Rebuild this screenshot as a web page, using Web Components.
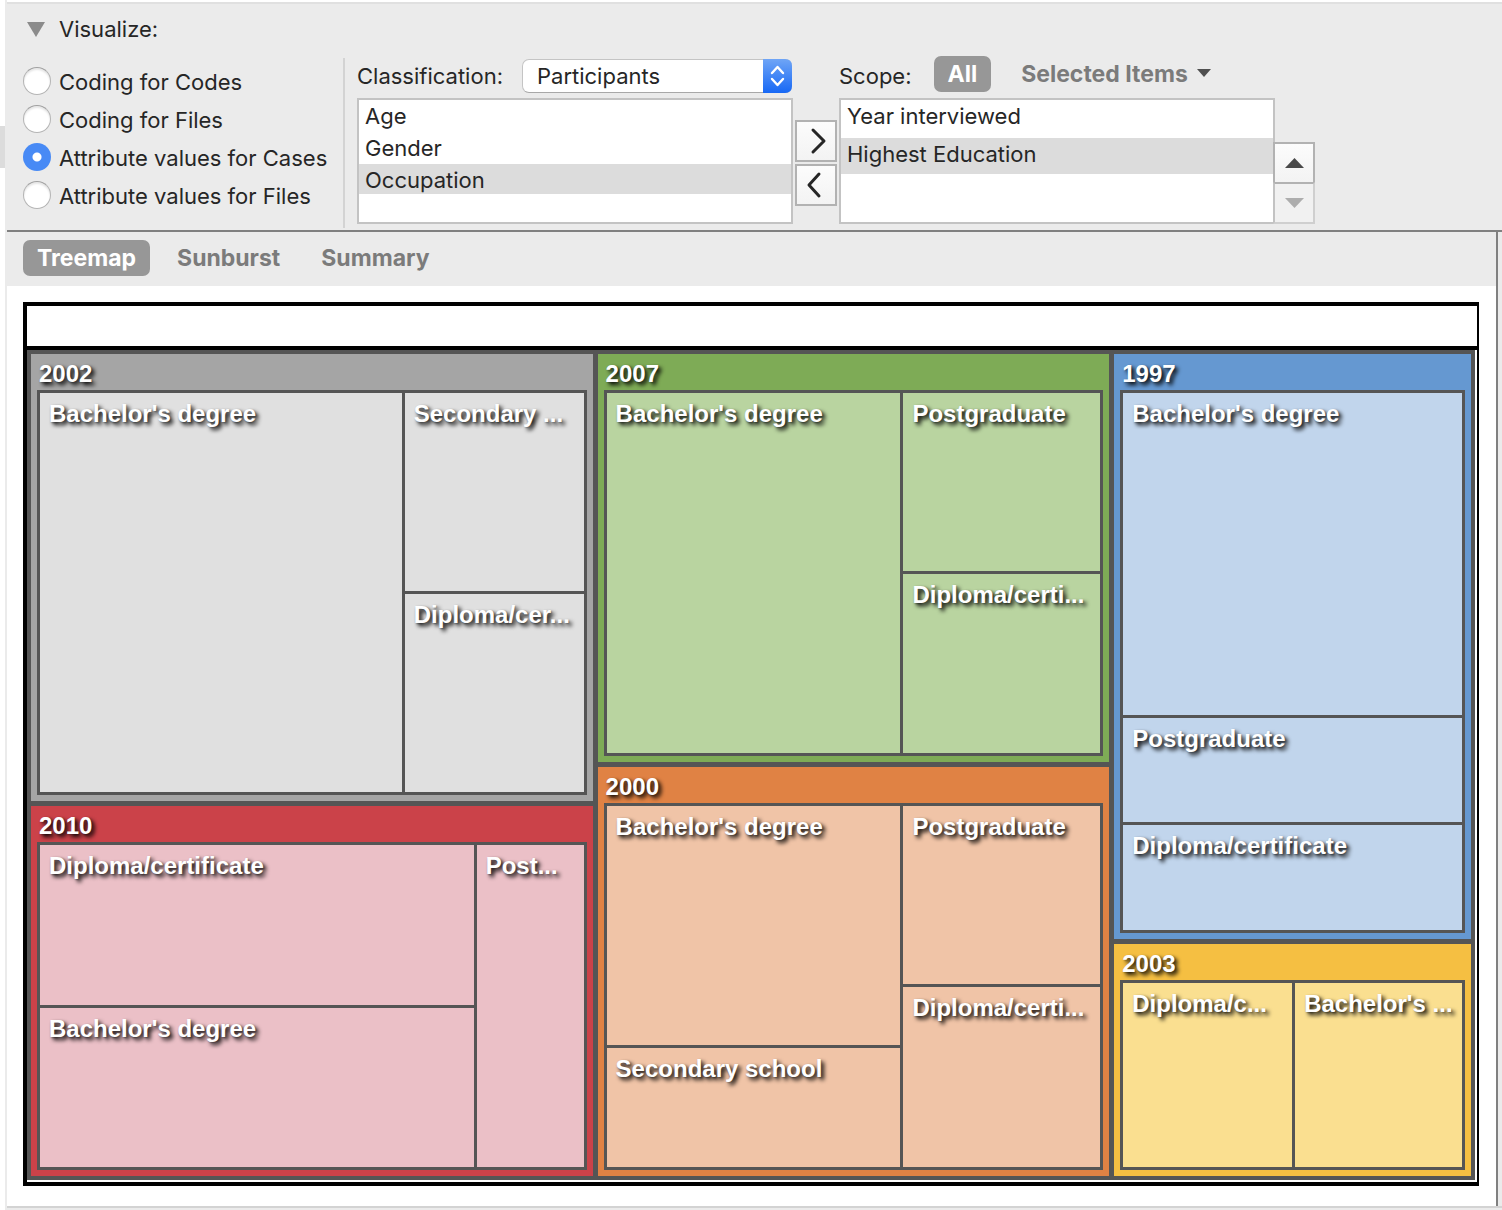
<!DOCTYPE html>
<html lang="en">
<head>
<meta charset="utf-8">
<title>Hierarchy chart</title>
<style>
  html, body { margin: 0; height: 100%; }
  body { font: 22px/32px Inter, "Liberation Sans", sans-serif; color: #262626; background: #fff; }
</style>
</head>
<body>
<hierarchy-app></hierarchy-app>
<script>
const define = (name, markup, setup) => customElements.define(name, class extends HTMLElement {
  constructor() {
    super();
    this.attachShadow({ mode: "open" }).innerHTML = "<style>*{box-sizing:border-box}button,select,input{font:inherit;color:inherit;margin:0}[hidden]{display:none}</style>" + markup;
  }
  connectedCallback() { if (setup) setup.call(this, this.shadowRoot); }
});

/* Radio buttons for the data source */
define("source-picker", `
<style>
  :host { display: block; }
  fieldset { border: 0; margin: 0; padding: 0; display: flex; flex-direction: column; gap: 10px; }
  label { display: flex; align-items: center; gap: 8px; height: 28px; white-space: nowrap; }
  span { padding-top: 2px; }
  input { appearance: none; width: 28px; height: 28px; flex: none; border-radius: 50%; background: #fff;
    border: 1px solid #b4b4b4; border-top-color: #a0a0a0; box-shadow: inset 0 2px 2px #e6e6e6; }
  input:checked { border: 0; background: radial-gradient(circle, #fff 0 4px, #488af5 5px); box-shadow: none; }
</style>
<fieldset aria-label="Source">
  <label><input type="radio" name="source"><span>Coding for Codes</span></label>
  <label><input type="radio" name="source"><span>Coding for Files</span></label>
  <label><input type="radio" name="source" checked><span>Attribute values for Cases</span></label>
  <label><input type="radio" name="source"><span>Attribute values for Files</span></label>
</fieldset>`);

/* Drop-down with its label */
define("class-select", `
<style>
  :host { display: flex; align-items: center; justify-content: space-between; height: 42px; padding: 0 1px 2px 0; }
  .box { display: grid; width: 270px; height: 34px; }
  select { grid-area: 1/1; appearance: none; width: 100%; height: 34px; border: 1px solid #c4c4c4; border-bottom-color: #a8a8a8;
    border-radius: 7px; background: #fff; padding: 0 36px 0 14px; line-height: 30px; }
  svg { grid-area: 1/1; justify-self: end; pointer-events: none; }
</style>
<label for="c">Classification:</label>
<div class="box">
  <select id="c"><option>Participants</option></select>
  <svg width="29" height="34" viewBox="0 0 29 34" aria-hidden="true">
    <defs><linearGradient id="g" x2="0" y2="1"><stop stop-color="#6fa5f6"/><stop offset="1" stop-color="#1768f5"/></linearGradient></defs>
    <path d="M0 0H22Q29 0 29 7V27Q29 34 22 34H0Z" fill="url(#g)"/>
    <path d="M9 14L14.500 8L20 14M9 20L14.500 26L20 20" fill="none" stroke="#fff" stroke-width="2.400" stroke-linecap="round" stroke-linejoin="round"/>
  </svg>
</div>`);

define("list-box", `
<style>
  :host { display: flex; flex-direction: column; gap: 2px; height: 126px; background: #fff; border: 2px solid #c3c3c3; box-sizing: border-box; }
</style><slot></slot>`, function () { this.setAttribute("role", "listbox"); });

define("list-item", `
<style>
  :host { display: block; box-sizing: border-box; height: var(--row, 30px); line-height: 32px; padding: 0 6px; white-space: nowrap; }
  :host([selected]) { background: #dcdcdc; }
</style><slot></slot>`, function () { this.setAttribute("role", "option"); });

/* Square button with a vector glyph */
define("glyph-button", `
<style>
  :host { display: block; }
  button { display: grid; place-items: center; width: 42px; height: 42px; padding: 0; border: 2px solid #b2b2b2; background: linear-gradient(#fcfcfc, #f3f3f3); }
  button:disabled { border-color: #b2b2b2 #cfcfcf #cfcfcf #c3c3c3; background: #f1f1f1; }
</style><button><svg width="38" height="38" viewBox="0 0 38 38" aria-hidden="true"></svg></button>`,
function (root) {
  const art = {
    right: '<path d="M16 8L27 19L16 30" fill="none" stroke="#262626" stroke-width="3" stroke-linecap="round" stroke-linejoin="round"/>',
    left: '<path d="M22 8L12 19L22 30" fill="none" stroke="#262626" stroke-width="3" stroke-linecap="round" stroke-linejoin="round"/>',
    up: '<path d="M10 24L19.500 14L29 24Z" fill="#4a4a4a"/>',
    down: '<path d="M10 14L19.500 24L29 14Z" fill="#adadad"/>'
  };
  root.querySelector("svg").innerHTML = art[this.getAttribute("glyph")];
  const button = root.querySelector("button");
  button.disabled = this.hasAttribute("disabled");
});

/* Rounded segment used for tabs and scope */
define("pill-button", `
<style>
  :host { display: block; }
  button { display: flex; align-items: center; gap: 8px; height: 36px; padding: 0 14px; border: 0; border-radius: 7px; background: none;
    font-size: 23px; font-weight: 700; line-height: 36px; color: #7b7b7b; white-space: nowrap; }
  :host([active]) button { background: #979797; color: #fff; }
</style>
<button><slot></slot><svg hidden width="16" height="13" viewBox="0 0 16 13" aria-hidden="true"><path d="M1 1H15L8 9Z" fill="#4f4f4f"/></svg></button>`,
function (root) { if (this.hasAttribute("menu")) root.querySelector("svg").removeAttribute("hidden"); });

define("visualize-panel", `
<style>
  :host { display: block; background: #ebebeb; border-top: 2px solid #e0e0e0; border-bottom: 2px solid #808080; padding: 10px 16px 2px; }
  .title { display: flex; align-items: center; gap: 14px; height: 30px; padding: 0 0 0 4px; border: 0; background: none; }
  .body { display: flex; padding-top: 12px; }
  source-picker { flex: none; width: 320px; padding-top: 11px; }
  .rule { width: 2px; flex: none; margin-top: 2px; background: #d3d3d3; margin-right: 12px; }
  .col { flex: 0 1 436px; min-width: 0; padding-bottom: 4px; }
  .moves { display: flex; flex-direction: column; gap: 2px; padding: 64px 2px 0; }
  .order { padding-top: 86px; margin-left: -2px; }
  .order glyph-button + glyph-button { margin-top: -2px; }
  .scope { display: flex; align-items: center; height: 42px; gap: 16px; padding-bottom: 2px; }
  .scope pill-button { margin-bottom: 4px; }
  .scope pill-button:first-of-type { margin-left: 6px; }
  .tall { --row: 36px; }
</style>
<button class="title" aria-expanded="true"><svg width="18" height="15" viewBox="0 0 18 15" aria-hidden="true"><path d="M0 0H18L9 15Z" fill="#8b8b8b"/></svg>Visualize:</button>
<div class="body">
  <source-picker></source-picker><div class="rule"></div>
  <div class="col">
    <class-select></class-select>
    <list-box><list-item>Age</list-item><list-item>Gender</list-item><list-item selected>Occupation</list-item></list-box>
  </div>
  <div class="moves"><glyph-button glyph="right"></glyph-button><glyph-button glyph="left"></glyph-button></div>
  <div class="col">
    <div class="scope"><span>Scope:</span><pill-button active>All</pill-button><pill-button menu>Selected Items</pill-button></div>
    <list-box class="tall"><list-item>Year interviewed</list-item><list-item selected>Highest Education</list-item></list-box>
  </div>
  <div class="order"><glyph-button glyph="up"></glyph-button><glyph-button glyph="down" disabled></glyph-button></div>
</div>`);

define("view-tabs", `
<style>:host { display: flex; gap: 13px; padding: 8px 16px 10px; background: #ebebeb; }</style>
<pill-button active>Treemap</pill-button><pill-button>Sunburst</pill-button><pill-button>Summary</pill-button>`);

/* Treemap: splits share space by weight along one axis */
define("map-split", `
<style>
  :host { display: flex; gap: var(--gap, 3px); min-width: 0; min-height: 0; flex-basis: 0; }
  :host([axis="y"]) { flex-direction: column; }
</style><slot></slot>`, function () { this.style.flexGrow = this.getAttribute("w") || 1; });

define("map-cell", `
<style>
  :host { display: block; min-width: 0; min-height: 0; flex-basis: 0; overflow: hidden; background: var(--cell); }
  div { padding: 7px 0 0 9px; line-height: 28px; white-space: nowrap; }
</style><div><slot></slot></div>`, function () { this.style.flexGrow = this.getAttribute("w") || 1; });

define("map-group", `
<style>
  :host { display: flex; min-width: 0; min-height: 0; flex-basis: 0; --gap: 3px; }
  section { flex: 1; min-width: 0; display: flex; flex-direction: column; background: var(--frame); padding: 0 6px 6px; }
  header { flex: none; height: 36px; padding: 4px 0 0 2px; line-height: 32px; }
  .inner { flex: 1; display: flex; min-height: 0; border: 3px solid #555; background: #555; }
</style><section><header></header><div class="inner"><slot></slot></div></section>`,
function (root) {
  this.style.flexGrow = this.getAttribute("w") || 1;
  root.querySelector("header").textContent = this.getAttribute("year");
});

define("tree-map", `
<style>
  :host { display: flex; flex-direction: column; border: 4px solid #000; border-right-width: 2px; background: #fff;
    font: bold 24px/28px "Liberation Sans", Arial, sans-serif; color: #fff; text-shadow: 3px 3px 4px #000, 1px 1px 2px rgba(0,0,0,.4); }
  .caption { flex: none; height: 44px; border-bottom: 4px solid #000; }
  .map { flex: 1; display: flex; min-height: 0; margin: 0 2px 2px 0; border: 4px solid #555; background: #555; --gap: 5px; }
  .map > map-split { flex: 1; }
</style>
<div class="caption"></div>
<div class="map"><map-split>
  <map-split axis="y" w="562">
    <map-group year="2002" w="447" style="--frame:#a5a5a5;--cell:#e0e0e0"><map-split>
      <map-cell w="362">Bachelor's degree</map-cell>
      <map-split axis="y" w="179"><map-cell>Secondary ...</map-cell><map-cell>Diploma/cer...</map-cell></map-split>
    </map-split></map-group>
    <map-group year="2010" w="370" style="--frame:#cb4249;--cell:#ebc0c7"><map-split>
      <map-split axis="y" w="434"><map-cell>Diploma/certificate</map-cell><map-cell>Bachelor's degree</map-cell></map-split>
      <map-cell w="107">Post...</map-cell>
    </map-split></map-group>
  </map-split>
  <map-split axis="y" w="512">
    <map-group year="2007" w="408" style="--frame:#7eab56;--cell:#b9d4a0"><map-split>
      <map-cell w="294">Bachelor's degree</map-cell>
      <map-split axis="y" w="197"><map-cell w="178">Postgraduate</map-cell><map-cell w="180">Diploma/certi...</map-cell></map-split>
    </map-split></map-group>
    <map-group year="2000" w="409" style="--frame:#e08244;--cell:#f0c4a7"><map-split>
      <map-split axis="y" w="294"><map-cell w="240">Bachelor's degree</map-cell><map-cell w="119">Secondary school</map-cell></map-split>
      <map-split axis="y" w="197"><map-cell w="178">Postgraduate</map-cell><map-cell w="181">Diploma/certi...</map-cell></map-split>
    </map-split></map-group>
  </map-split>
  <map-split axis="y" w="357">
    <map-group year="1997" w="585" style="--frame:#6598d1;--cell:#c1d5ec"><map-split axis="y">
      <map-cell w="322">Bachelor's degree</map-cell><map-cell w="104">Postgraduate</map-cell><map-cell w="105">Diploma/certificate</map-cell>
    </map-split></map-group>
    <map-group year="2003" w="232" style="--frame:#f5bf42;--cell:#fadf90"><map-split>
      <map-cell w="169">Diploma/c...</map-cell><map-cell w="167">Bachelor's ...</map-cell>
    </map-split></map-group>
  </map-split>
</map-split></div>`);

define("hierarchy-app", `
<style>
  :host { display: flex; min-height: 100vh; }
  aside { flex: none; width: 7px; border-right: 2px solid #ebebeb; padding-top: 126px; }
  aside div { height: 42px; background: #dcdcdc; }
  main { flex: 1; min-width: 0; display: flex; flex-direction: column; padding-top: 2px; }
  .view { flex: 1; display: flex; background: #ebebeb; }
  .chart { flex: 1; min-width: 0; display: flex; flex-direction: column; background: #fff; border-right: 2px solid #808080; margin-right: 4px; }
  tree-map { flex: 1; min-height: 600px; margin: 16px 17px 20px 16px; }
  footer { height: 4px; border-top: 2px solid #d3d3d3; background: #ebebeb; }
</style>
<aside><div></div></aside>
<main>
  <visualize-panel></visualize-panel>
  <div class="view"><div class="chart"><view-tabs></view-tabs><tree-map></tree-map></div></div>
  <footer></footer>
</main>`);
</script>
</body>
</html>
